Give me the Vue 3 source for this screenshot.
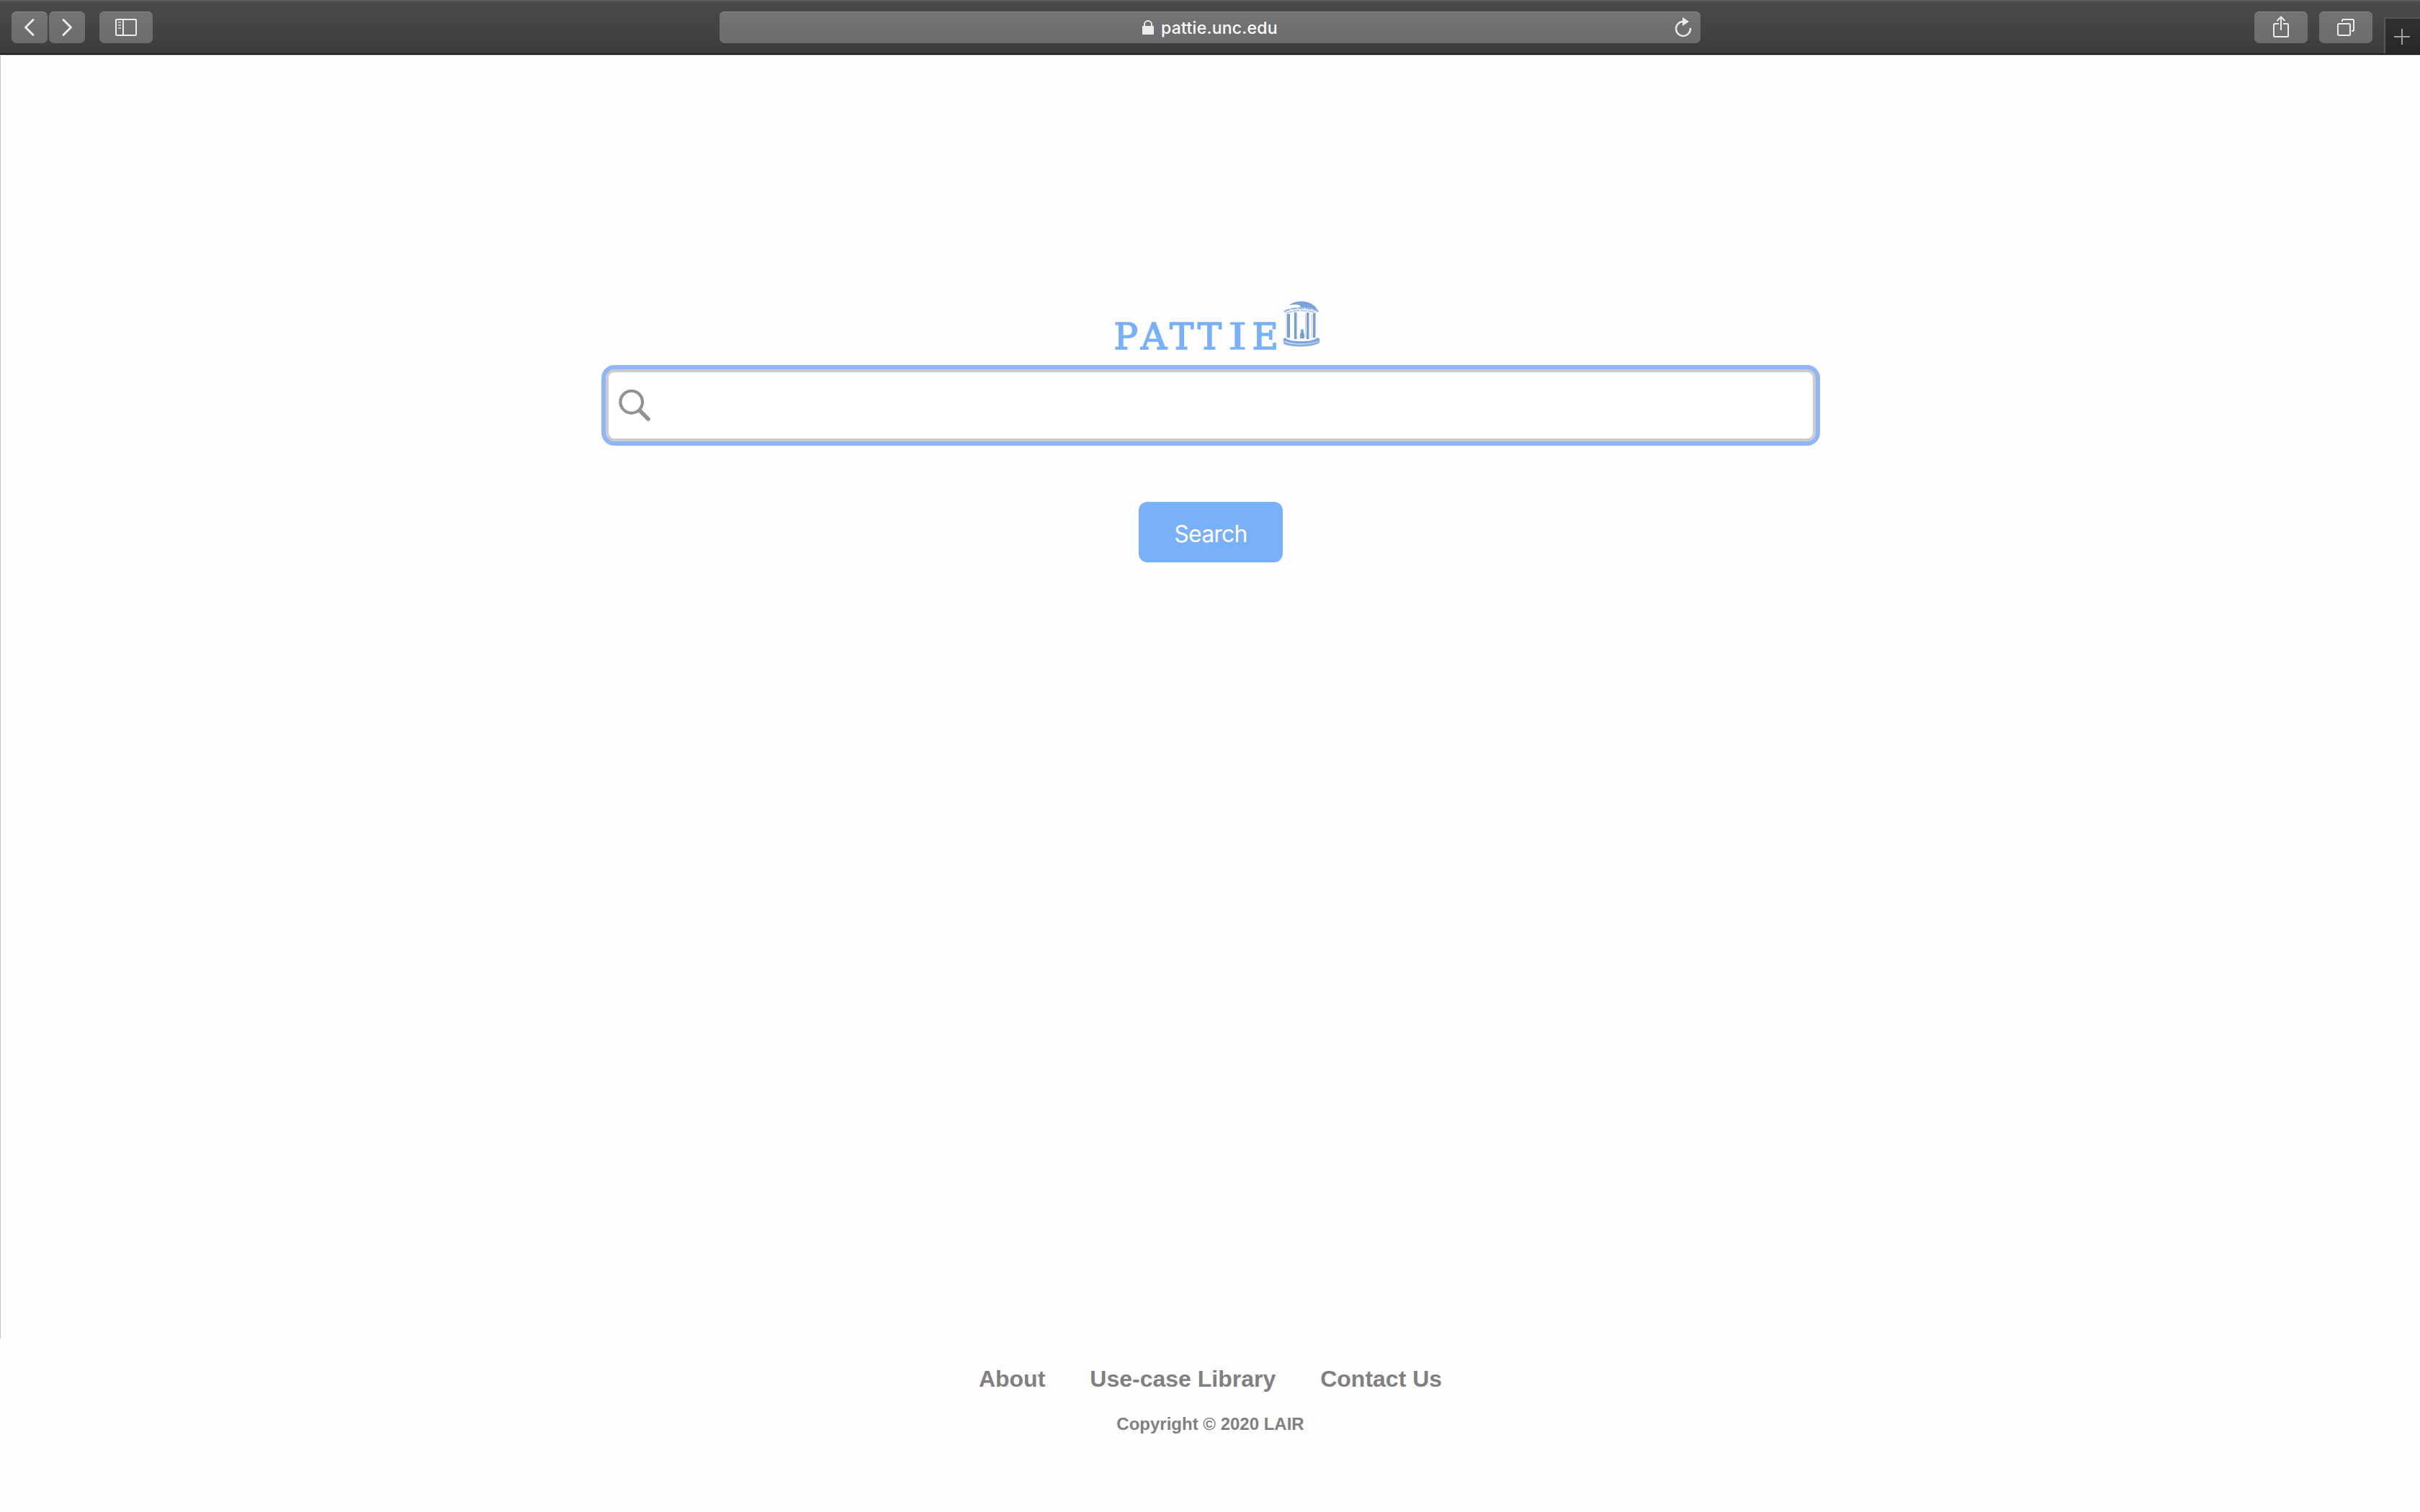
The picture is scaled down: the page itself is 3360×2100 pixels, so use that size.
<script setup>
const letters = 'PATTIE'.split('')
const links = ['About', 'Use-case Library', 'Contact Us']
</script>

<template>
  <div class="window">
    <header class="toolbar">
      <div class="side left">
        <button class="tool nav" aria-label="Back">
          <svg width="50" height="44" viewBox="0 0 50 44"><path d="M30 11.500 19.500 22l10.500 10.500" class="thick" /></svg>
        </button>
        <button class="tool nav" aria-label="Forward">
          <svg width="50" height="44" viewBox="0 0 50 44"><path d="M20 11.500 30.500 22 20 32.500" class="thick" /></svg>
        </button>
        <button class="tool sidebar" aria-label="Sidebar">
          <svg width="74" height="44" viewBox="0 0 74 44">
            <rect x="23" y="11" width="28" height="22" rx="1" />
            <path d="M33 11v22" />
            <path d="M26 15h4M26 19h4M26 23h4" class="faint" />
          </svg>
        </button>
      </div>
      <div class="address">
        <svg class="lock" width="16" height="20" viewBox="0 0 16 20">
          <path d="M3 9V6a5 5 0 0 1 10 0v3" />
          <rect x="0" y="8" width="16" height="12" rx="1" class="solid" />
        </svg>
        <span class="url">pattie.unc.edu</span>
        <svg class="reload" width="24" height="28" viewBox="0 0 24 28">
          <path d="M11 6A10 10 0 1 0 22 15" class="ring" />
          <path d="M11 0v12l9-6z" class="solid" />
        </svg>
      </div>
      <div class="side right">
        <button class="tool" aria-label="Share">
          <svg width="74" height="44" viewBox="0 0 74 44">
            <path d="M34 17h-5.500a1.500 1.500 0 0 0-1.500 1.500v15a1.500 1.500 0 0 0 1.500 1.500h17a1.500 1.500 0 0 0 1.500-1.500v-15a1.500 1.500 0 0 0-1.500-1.500H40M37 26V7.500M31.500 13 37 7.500l5.500 5.500" />
          </svg>
        </button>
        <button class="tool" aria-label="Tabs">
          <svg width="74" height="44" viewBox="0 0 74 44">
            <rect x="26" y="17" width="17" height="16" rx="1.500" />
            <path d="M32 14v-1.500a1.500 1.500 0 0 1 1.500-1.500h13a1.500 1.500 0 0 1 1.500 1.500v13a1.500 1.500 0 0 1-1.500 1.500H45" />
          </svg>
        </button>
        <button class="newtab" aria-label="New tab">
          <svg width="48" height="48" viewBox="0 0 48 48"><path d="M12 25h22M23 14v22" class="plus" /></svg>
        </button>
      </div>
    </header>

    <main>
      <div class="brand">
        <h1><span v-for="(letter, i) in letters" :key="i" :class="{ wide: letter === 'I' }">{{ letter }}</span></h1>
        <svg class="well" width="54" height="66" viewBox="0 0 54 66">
          <path d="M9 7C17-1 42-2 49 15L44 13C38 10 32 10 25 10C26 6 17 5 9 7Z" fill="#79a3da" />
          <path d="M2 16C13 9 38 9 50 16" class="rim" />
          <path d="M5 18C16 13 37 13 46 18" class="rim pale" />
          <g fill="#789fd6">
            <path d="M6 19h4v33H6zM16 17h3.500v37H16zM33 17h3.500v37H33zM42 18h3.500v34H42z" />
            <path d="M25 42q2-4 4 0v4h1v7h-6v-7h1z" />
          </g>
          <path d="M5 19v33M31.500 18v34M40.500 19v33" stroke="#bdd1ee" fill="none" />
          <path d="M3 52C0 54 0 56 2 57C13 63 40 62 49 57C53 55 52 53 48 52C44 56 34 57 26 57C16 57 7 56 3 52Z" fill="#7ba5dc" />
          <path d="M1 57V60C8 66 43 66 51 59V55C42 63 11 63 1 57Z" fill="#8caddc" />
          <path d="M3 57C14 62 38 62 49 57" stroke="#d5e2f5" fill="none" />
        </svg>
      </div>
      <div class="searchbox">
        <svg width="46" height="46" viewBox="0 0 46 46">
          <circle cx="18.700" cy="18.300" r="15.300" />
          <path d="M30 30 42 42" />
        </svg>
      </div>
      <button class="submit">Search</button>
    </main>

    <footer>
      <nav><a v-for="link in links" :key="link">{{ link }}</a></nav>
      <p>Copyright © 2020 LAIR</p>
    </footer>
  </div>
</template>

<style>
body { margin: 0; background: #fefefe; }
</style>

<style scoped>
.window {
  width: 3360px;
  height: 2100px;
  display: flex;
  flex-direction: column;
  overflow: hidden;
}
button { border: 0; padding: 0; margin: 0; }
svg { display: block; flex: none; }
.toolbar {
  box-sizing: border-box;
  height: 77px;
  flex: none;
  display: flex;
  align-items: flex-start;
  justify-content: space-between;
  padding-top: 16px;
  background: linear-gradient(#626365 0 1px, #59595b 1px 2px, #4a4b4d 2px, #3b3c3e 74px, #282828 74px 75px, #000 75px 76px, #c6c6c6 76px);
}
.side { display: flex; width: 999px; box-sizing: border-box; }
.left { padding-left: 16px; gap: 2px; }
.right { justify-content: flex-end; gap: 16px; }
.tool, .address {
  height: 44px;
  border-radius: 7px;
  background: linear-gradient(#747476, #6c6c6e);
  box-shadow: inset 0 1px #8a8a8b;
}
.tool { width: 74px; }
.nav { width: 50px; }
.sidebar { margin-left: 18px; }
.toolbar svg { fill: none; stroke: #ececec; stroke-width: 2; }
.toolbar .thick { stroke-width: 3; stroke-linecap: round; stroke-linejoin: round; }
.toolbar .faint { stroke: #c2c2c2; }
.toolbar .solid { fill: #ececec; stroke: none; }
.toolbar .ring { stroke-width: 2.400; }
.toolbar .plus { stroke: #a0a0a0; }
.address {
  width: 1362px;
  flex: none;
  position: relative;
  display: flex;
  align-items: center;
  justify-content: center;
  gap: 10px;
}
.url {
  font: 500 23px/44px Inter, sans-serif;
  letter-spacing: 0.250px;
  color: #fff;
  padding-top: 2px;
}
.reload { position: absolute; right: 12px; top: 8px; }
.newtab {
  box-sizing: border-box;
  width: 50px;
  height: 50px;
  margin-top: 8px;
  border-left: 2px solid #59595b;
  border-top: 2px solid #555557;
  background: linear-gradient(#303032, #272729);
}
main {
  box-sizing: border-box;
  height: 1782px;
  flex: none;
  border-left: 1px solid #c6c6c6;
  padding: 339px 0 0 834px;
  background: #fefefe;
}
.brand { display: flex; height: 91px; margin-left: 709px; }
h1 {
  margin: 22px 0 0;
  display: flex;
  font: 400 50px/60px "DejaVu Serif", serif;
  color: #78b0fa;
  -webkit-text-stroke: 1.600px #78b0fa;
}
h1 span { width: 38.700px; display: flex; justify-content: center; }
h1 .wide { transform: scaleX(1.350); -webkit-text-stroke-width: 0.800px; }
.well { margin: 1px 0 0 5px; }
.rim { fill: none; stroke: #9ab8e4; stroke-width: 2.500; stroke-dasharray: 9 1; }
.pale { stroke: #b6cbea; stroke-width: 2; }
.searchbox {
  box-sizing: border-box;
  width: 1680px;
  height: 100px;
  margin: 6px;
  border: 4px solid #ccc;
  border-radius: 12px;
  box-shadow: 0 0 0 6px #91b5f8;
  background: #fff;
  padding: 23px 13px;
}
.searchbox svg { fill: none; stroke: #929292; stroke-width: 4.200; }
.searchbox path { stroke-width: 5.500; stroke-linecap: round; }
.submit {
  display: block;
  width: 200px;
  height: 84px;
  margin: 84px 0 0 746px;
  border-radius: 12px;
  background: #78b0fa;
  color: #fff;
  font: 400 32px/79px Inter, sans-serif;
  letter-spacing: -0.800px;
  padding-top: 5px;
}
footer {
  font-family: "Liberation Sans", Arial, sans-serif;
  font-weight: 700;
  color: #808080;
  text-align: center;
  padding: 38px 0 0 1px;
}
nav { display: flex; justify-content: center; gap: 62px; font-size: 32px; line-height: 36px; }
p { margin: 31px 0 0; font-size: 24px; line-height: 28px; }
</style>
